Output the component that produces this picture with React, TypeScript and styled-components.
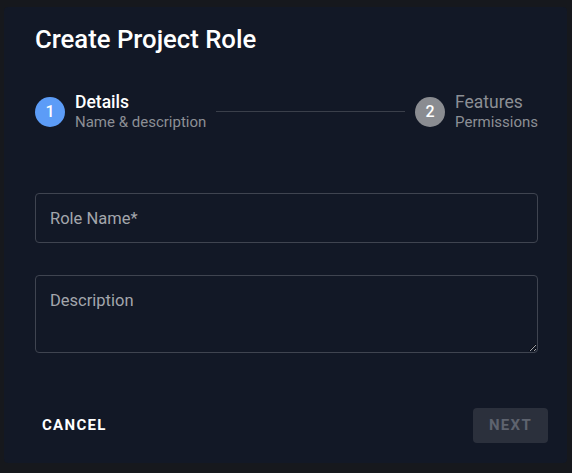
import styled, { createGlobalStyle } from "styled-components";

const GlobalStyle = createGlobalStyle`
  html, body {
    margin: 0;
    padding: 0;
    background: #16181d;
  }
  body {
    font-family: Roboto, "Liberation Sans", sans-serif;
  }
`;

const Backdrop = styled.div`
  width: 572px;
  height: 473px;
  box-sizing: border-box;
  padding: 7px 5px 10px 4px;
  display: flex;
`;

const Dialog = styled.section`
  flex: 1;
  background: #121826;
  border-radius: 4px;
  padding: 17px 29px 20px 31px;
  display: flex;
  flex-direction: column;
  box-sizing: border-box;
`;

const Title = styled.h2`
  margin: 0;
  font-size: 25.7px;
  font-weight: 500;
  color: #ffffff;
  line-height: 30px;
`;

const Stepper = styled.div`
  display: flex;
  align-items: center;
  margin-top: 37px;
`;

const Step = styled.div`
  display: flex;
  align-items: center;
  gap: 10px;
`;

const StepCircle = styled.div<{ $active?: boolean }>`
  width: 30px;
  height: 30px;
  border-radius: 50%;
  background: ${({ $active }) => ($active ? "#5c9cf7" : "#8a8c91")};
  color: #ffffff;
  font-size: 16px;
  font-weight: 500;
  display: flex;
  align-items: center;
  justify-content: center;
`;

const StepText = styled.div`
  display: flex;
  flex-direction: column;
`;

const StepLabel = styled.span<{ $active?: boolean }>`
  font-size: 17.5px;
  font-weight: ${({ $active }) => ($active ? 500 : 400)};
  color: ${({ $active }) => ($active ? "#ffffff" : "#8c8f95")};
  line-height: 22px;
`;

const StepHint = styled.span`
  font-size: 15px;
  color: #8c8f95;
  line-height: 19px;
`;

const Connector = styled.div`
  flex: 1;
  height: 1px;
  background: #3a3f4a;
  margin: 0 10px;
`;

const Form = styled.div`
  display: flex;
  flex-direction: column;
  gap: 32px;
  margin-top: 61px;
`;

const TextInput = styled.input`
  height: 50px;
  box-sizing: border-box;
  border: 1px solid #3f4450;
  border-radius: 4px;
  background: transparent;
  padding: 0 14px;
  font-family: inherit;
  font-size: 16.5px;
  color: #ffffff;
  outline: none;
  &::placeholder {
    color: #a3a6ac;
  }
`;

const TextArea = styled.textarea`
  height: 78px;
  box-sizing: border-box;
  border: 1px solid #3f4450;
  border-radius: 4px;
  background: transparent;
  padding: 15px 14px;
  font-family: inherit;
  font-size: 16.5px;
  color: #ffffff;
  outline: none;
  resize: vertical;
  &::placeholder {
    color: #a3a6ac;
  }
`;

const Actions = styled.div`
  margin-top: auto;
  margin-right: -10px;
  display: flex;
  justify-content: space-between;
  align-items: center;
`;

const Button = styled.button<{ $disabled?: boolean }>`
  font-family: inherit;
  font-size: 15px;
  font-weight: 700;
  letter-spacing: 1.3px;
  border: none;
  border-radius: 4px;
  height: 35px;
  padding: 0 ${({ $disabled }) => ($disabled ? "16px" : "7px")};
  padding-bottom: 2px;
  background: ${({ $disabled }) => ($disabled ? "#2b303c" : "transparent")};
  color: ${({ $disabled }) => ($disabled ? "#5e636e" : "#ffffff")};
`;

export default function App() {
  return (
    <>
      <GlobalStyle />
      <Backdrop>
        <Dialog>
          <Title>Create Project Role</Title>
          <Stepper>
            <Step>
              <StepCircle $active>1</StepCircle>
              <StepText>
                <StepLabel $active>Details</StepLabel>
                <StepHint>Name &amp; description</StepHint>
              </StepText>
            </Step>
            <Connector />
            <Step>
              <StepCircle>2</StepCircle>
              <StepText>
                <StepLabel>Features</StepLabel>
                <StepHint>Permissions</StepHint>
              </StepText>
            </Step>
          </Stepper>
          <Form>
            <TextInput placeholder="Role Name*" />
            <TextArea placeholder="Description" />
          </Form>
          <Actions>
            <Button>CANCEL</Button>
            <Button $disabled>NEXT</Button>
          </Actions>
        </Dialog>
      </Backdrop>
    </>
  );
}
